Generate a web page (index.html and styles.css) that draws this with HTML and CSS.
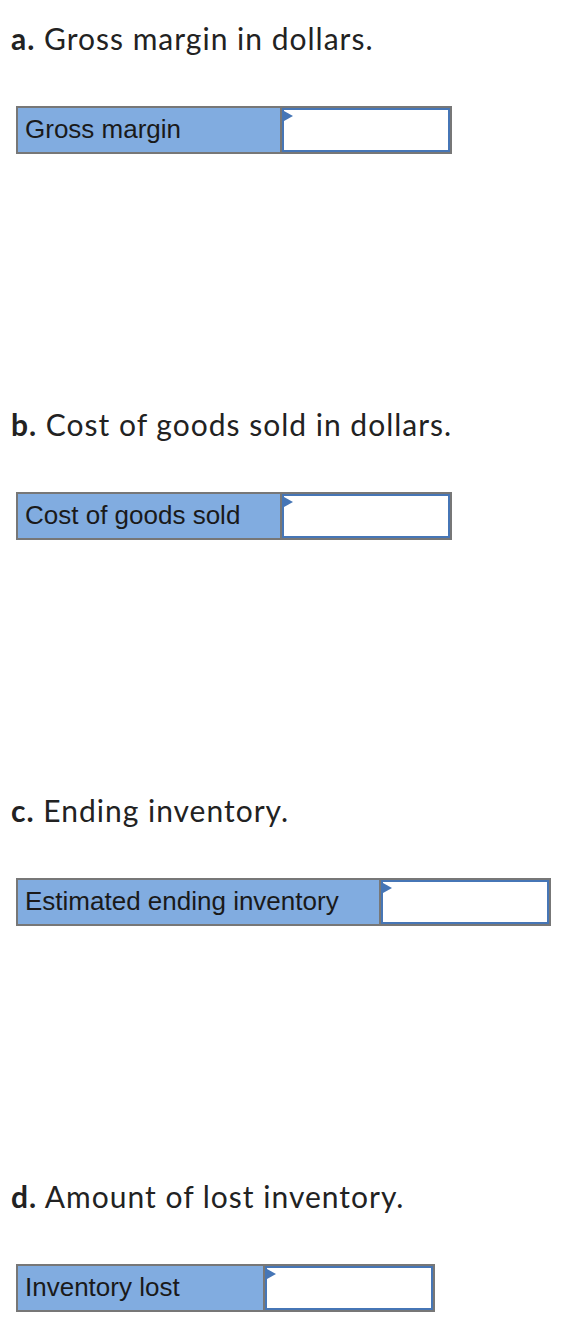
FILE: index.html
```html
<!DOCTYPE html>
<html>
<head>
<meta charset="utf-8">
<link rel="stylesheet" href="styles.css">
</head>
<body>
<div class="page">
  <section class="part">
    <h2 class="q"><b>a.</b> Gross margin in dollars.</h2>
    <div class="row">
      <div class="label w-a">Gross margin</div>
      <div class="input"><span class="flag"></span></div>
    </div>
  </section>
  <section class="part">
    <h2 class="q"><b>b.</b> Cost of goods sold in dollars.</h2>
    <div class="row">
      <div class="label w-a">Cost of goods sold</div>
      <div class="input"><span class="flag"></span></div>
    </div>
  </section>
  <section class="part">
    <h2 class="q"><b>c.</b> Ending inventory.</h2>
    <div class="row">
      <div class="label w-c">Estimated ending inventory</div>
      <div class="input"><span class="flag"></span></div>
    </div>
  </section>
  <section class="part last">
    <h2 class="q"><b>d.</b> Amount of lost inventory.</h2>
    <div class="row">
      <div class="label w-d">Inventory lost</div>
      <div class="input"><span class="flag"></span></div>
    </div>
  </section>
</div>
</body>
</html>
```

FILE: styles.css
```css
html, body {
  margin: 0;
  padding: 0;
  background: #fff;
}
.page {
  display: flex;
  flex-direction: column;
  padding: 20px 0 0 16px;
}
.part {
  height: 386px;
  display: flex;
  flex-direction: column;
  align-items: flex-start;
}
.part.last {
  height: auto;
}
.q {
  margin: 0 0 0 -5px;
  font-family: Lato, "Open Sans", sans-serif;
  font-weight: 400;
  font-size: 30px;
  line-height: 36px;
  letter-spacing: 1px;
  color: #222;
}
.q b {
  font-weight: 700;
}
.row {
  margin-top: 50px;
  display: flex;
  border: 2px solid #777;
  height: 44px;
}
.label {
  box-sizing: border-box;
  background: #81ace0;
  border-right: 2px solid #777;
  padding-left: 7px;
  font-family: "Liberation Sans", Arial, sans-serif;
  font-size: 26px;
  line-height: 42px;
  color: #1a1a1a;
}
.w-a { width: 264px; }
.w-c { width: 363px; }
.w-d { width: 247px; }
.input {
  position: relative;
  box-sizing: border-box;
  width: 168px;
  border: 2px solid #4676b6;
  background: #fff;
}
.flag {
  position: absolute;
  left: 0;
  top: 1px;
  width: 0;
  height: 0;
  border-top: 5px solid transparent;
  border-bottom: 5px solid transparent;
  border-left: 9px solid #4676b6;
}
```
